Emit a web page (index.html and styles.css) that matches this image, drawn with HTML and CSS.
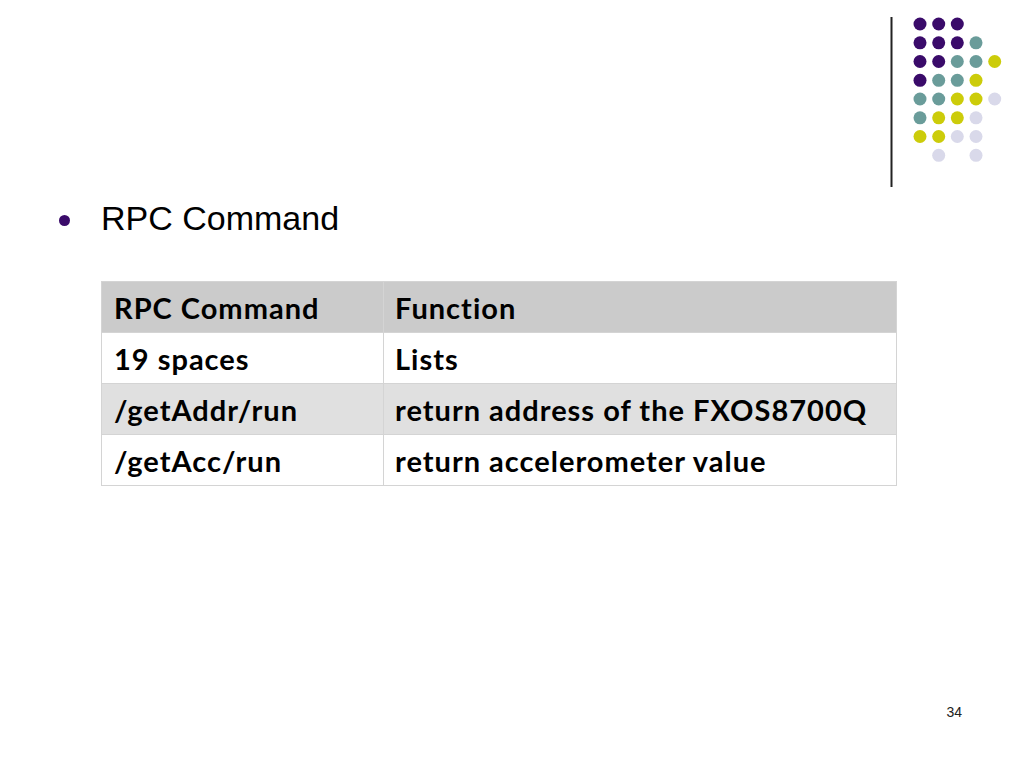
FILE: index.html
```html
<!DOCTYPE html>
<html>
<head>
<meta charset="utf-8">
<link rel="stylesheet" href="styles.css">
</head>
<body>
<div class="slide">
  <div class="top">
    <svg class="logo" width="120" height="172" viewBox="0 0 120 172">
      <rect x="1.5" y="1" width="2" height="170" fill="#222"/>
      <g>
        <circle cx="31" cy="8" r="6.5" fill="#3a0b6a"/>
        <circle cx="49.7" cy="8" r="6.5" fill="#3a0b6a"/>
        <circle cx="68.3" cy="8" r="6.5" fill="#3a0b6a"/>

        <circle cx="31" cy="26.8" r="6.5" fill="#3a0b6a"/>
        <circle cx="49.7" cy="26.8" r="6.5" fill="#3a0b6a"/>
        <circle cx="68.3" cy="26.8" r="6.5" fill="#3a0b6a"/>
        <circle cx="87" cy="26.8" r="6.5" fill="#6a9c9a"/>

        <circle cx="31" cy="45.5" r="6.5" fill="#3a0b6a"/>
        <circle cx="49.7" cy="45.5" r="6.5" fill="#3a0b6a"/>
        <circle cx="68.3" cy="45.5" r="6.5" fill="#6a9c9a"/>
        <circle cx="87" cy="45.5" r="6.5" fill="#6a9c9a"/>
        <circle cx="105.7" cy="45.5" r="6.5" fill="#cccc0a"/>

        <circle cx="31" cy="64.3" r="6.5" fill="#3a0b6a"/>
        <circle cx="49.7" cy="64.3" r="6.5" fill="#6a9c9a"/>
        <circle cx="68.3" cy="64.3" r="6.5" fill="#6a9c9a"/>
        <circle cx="87" cy="64.3" r="6.5" fill="#cccc0a"/>

        <circle cx="31" cy="83" r="6.5" fill="#6a9c9a"/>
        <circle cx="49.7" cy="83" r="6.5" fill="#6a9c9a"/>
        <circle cx="68.3" cy="83" r="6.5" fill="#cccc0a"/>
        <circle cx="87" cy="83" r="6.5" fill="#cccc0a"/>
        <circle cx="105.7" cy="83" r="6.5" fill="#d9d9ea"/>

        <circle cx="31" cy="101.8" r="6.5" fill="#6a9c9a"/>
        <circle cx="49.7" cy="101.8" r="6.5" fill="#cccc0a"/>
        <circle cx="68.3" cy="101.8" r="6.5" fill="#cccc0a"/>
        <circle cx="87" cy="101.8" r="6.5" fill="#d9d9ea"/>

        <circle cx="31" cy="120.5" r="6.5" fill="#cccc0a"/>
        <circle cx="49.7" cy="120.5" r="6.5" fill="#cccc0a"/>
        <circle cx="68.3" cy="120.5" r="6.5" fill="#d9d9ea"/>
        <circle cx="87" cy="120.5" r="6.5" fill="#d9d9ea"/>

        <circle cx="49.7" cy="139.3" r="6.5" fill="#d9d9ea"/>
        <circle cx="87" cy="139.3" r="6.5" fill="#d9d9ea"/>
      </g>
    </svg>
  </div>

  <div class="bullet-row">
    <span class="bullet"></span>
    <span class="bullet-text">RPC Command</span>
  </div>

  <table class="rpc">
    <tr class="head"><td class="c1">RPC Command</td><td>Function</td></tr>
    <tr class="light"><td class="c1">19 spaces</td><td>Lists</td></tr>
    <tr class="band"><td class="c1">/getAddr/run</td><td>return address of the FXOS8700Q</td></tr>
    <tr class="light"><td class="c1">/getAcc/run</td><td>return accelerometer value</td></tr>
  </table>

  <div class="footer">
    <span class="page-num">34</span>
  </div>
</div>
</body>
</html>
```

FILE: styles.css
```css
html, body {
  margin: 0;
  padding: 0;
  background: #ffffff;
}

.slide {
  width: 1024px;
  height: 768px;
  display: flex;
  flex-direction: column;
  font-family: "Liberation Sans", Arial, sans-serif;
  color: #000;
  overflow: hidden;
}

.top {
  height: 188px;
  display: flex;
  justify-content: flex-end;
  align-items: flex-start;
  padding-top: 16px;
  padding-right: 15px;
  box-sizing: border-box;
}

.logo {
  display: block;
}

.bullet-row {
  display: flex;
  align-items: center;
  padding-left: 59px;
  height: 64px;
  margin-top: -2px;
}

.bullet {
  width: 11px;
  height: 11px;
  border-radius: 50%;
  background: #3a0b6a;
  margin-right: 31px;
  margin-top: 5px;
  flex: none;
}

.bullet-text {
  font-size: 34px;
  line-height: 1;
  margin-top: 0;
}

.rpc {
  margin-left: 101px;
  margin-top: 31px;
  width: 796px;
  border-collapse: collapse;
  font-family: "Lato", "Open Sans", sans-serif;
  font-weight: 700;
  font-size: 29px;
  letter-spacing: 1px;
  table-layout: fixed;
}

.rpc td {
  height: 51px;
  padding: 0 0 0 11px;
  border: 1px solid #d4d4d4;
  box-sizing: border-box;
  vertical-align: middle;
  line-height: 1;
  white-space: nowrap;
}

.rpc td.c1 {
  width: 282px;
  padding-left: 12px;
}

.rpc tr.head td {
  background: #cbcbcb;
}

.rpc tr.light td {
  background: #ffffff;
}

.rpc tr.band td {
  background: #e0e0e0;
}

.footer {
  margin-top: auto;
  display: flex;
  justify-content: flex-end;
  padding-right: 62px;
  padding-bottom: 48px;
}

.page-num {
  font-size: 14px;
  color: #222;
}
```
